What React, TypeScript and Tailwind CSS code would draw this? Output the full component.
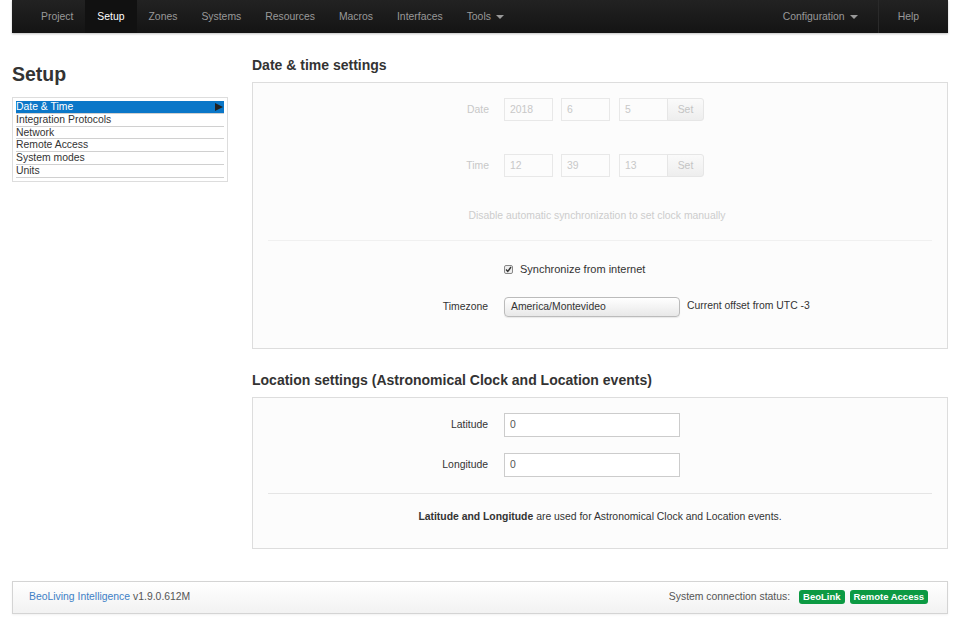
import React from "react";

const font = { fontFamily: '"Liberation Sans", Arial, sans-serif' };

function Caret() {
  return <span className="inline-block ml-[5px] align-middle border-t-[4px] border-t-current border-x-[4px] border-x-transparent w-0 h-0" />;
}

function NavItem({ label, active, caret }: { label: string; active?: boolean; caret?: boolean }) {
  return (
    <div
      className={
        "h-full flex items-center px-[12px] " +
        (active ? "bg-[#111111] text-white" : "text-[#999999]")
      }
    >
      {label}
      {caret && <Caret />}
    </div>
  );
}

function DisabledInput({ v }: { v: string }) {
  return (
    <div className="w-[49px] h-[23px] border border-[#e8e8e8] bg-[#fcfcfc] text-[#c8c8c8] pl-[5px] flex items-center text-[10.4px]">
      {v}
    </div>
  );
}

function DateRow({ label, vals }: { label: string; vals: string[] }) {
  return (
    <div className="flex items-center">
      <div className="w-[236px] text-right text-[#c8c8c8] text-[10.4px]">{label}</div>
      <div className="ml-[15px] flex items-center">
        <DisabledInput v={vals[0]} />
        <div className="w-[8px]" />
        <DisabledInput v={vals[1]} />
        <div className="w-[9px]" />
        <DisabledInput v={vals[2]} />
        <div className="w-[37px] h-[23px] border border-[#e6e6e6] rounded-r-[3px] bg-gradient-to-b from-[#fafafa] to-[#eeeeee] text-[#c4c4c4] flex items-center justify-center text-[10.4px] -ml-px">
          Set
        </div>
      </div>
    </div>
  );
}

export default function App() {
  const items = ["Date & Time", "Integration Protocols", "Network", "Remote Access", "System modes", "Units"];
  return (
    <div style={font} className="w-[958px] h-[626px] bg-white text-[#333333] overflow-hidden">
      {/* Navbar */}
      <div className="ml-[12px] w-[936px] h-[33px] bg-gradient-to-b from-[#222222] to-[#141414] flex items-stretch text-[10.4px] shadow-[0_1px_2px_rgba(0,0,0,0.25)]">
        <div className="flex items-stretch pl-[17px]">
          <NavItem label="Project" />
          <NavItem label="Setup" active />
          <NavItem label="Zones" />
          <NavItem label="Systems" />
          <NavItem label="Resources" />
          <NavItem label="Macros" />
          <NavItem label="Interfaces" />
          <NavItem label="Tools" caret />
        </div>
        <div className="flex-1" />
        <div className="flex items-stretch">
          <div className="h-full flex items-center px-[12px] text-[#999999] mr-[8px]">
            Configuration
            <Caret />
          </div>
          <div className="w-px bg-[#0c0c0c] border-r border-r-[#2a2a2a]" />
          <div className="h-full flex items-center pl-[19px] pr-[29px] text-[#999999]">Help</div>
        </div>
      </div>

      {/* Main */}
      <div className="ml-[12px] w-[936px] flex">
        {/* Sidebar */}
        <div className="w-[216px] shrink-0">
          <div className="text-[19.5px] font-bold text-[#333333] mt-[29px] leading-[24px]">Setup</div>
          <div className="mt-[11px] border border-[#dddddd] px-[3px] pt-[3px] pb-[3px]">
            {items.map((it, i) => (
              <div
                key={it}
                className={
                  "h-[12.8px] leading-[12px] text-[10.4px] flex items-center justify-between border-b border-b-[#d0d0d0] " +
                  (i === 0 ? "bg-[#0b77c8] text-white" : "text-[#333333]")
                }
              >
                <span>{it}</span>
                {i === 0 && (
                  <span className="w-0 h-0 border-y-[4.5px] border-y-transparent border-l-[8px] border-l-[#222222] mr-[1px]" />
                )}
              </div>
            ))}
          </div>
        </div>

        {/* Content */}
        <div className="ml-[24px] flex-1">
          <div className="mt-[24px] text-[14px] font-bold leading-[17px] text-[#333333]">Date &amp; time settings</div>
          <div className="mt-[8px] border border-[#dddddd] bg-[#fcfcfc] pt-[15px] pb-[31px]">
            <DateRow label="Date" vals={["2018", "6", "5"]} />
            <div className="h-[33px]" />
            <DateRow label="Time" vals={["12", "39", "13"]} />
            <div className="mt-[32px] text-center text-[10.4px] text-[#cccccc] leading-[14px] pr-[6px]">
              Disable automatic synchronization to set clock manually
            </div>
            <div className="mx-[15px] mt-[17px] border-t border-t-[#f0f0f0]" />
            <div className="mt-[20px] flex items-center">
              <div className="w-[251px]" />
              <div className="w-[9px] h-[9px] border border-[#888888] rounded-[2px] bg-[#eeeeee] flex items-center justify-center">
                <svg width="7" height="7" viewBox="0 0 7 7">
                  <path d="M1 3.5 L2.8 5.5 L6 1" stroke="#333" strokeWidth="1.4" fill="none" />
                </svg>
              </div>
              <span className="ml-[7px] text-[11px] text-[#333333]">Synchronize from internet</span>
            </div>
            <div className="mt-[19px] flex items-center">
              <div className="w-[235px] text-right text-[10.4px] text-[#333333]">Timezone</div>
              <div className="ml-[16px] w-[176px] h-[20px] rounded-[4px] border border-[#bbbbbb] bg-gradient-to-b from-[#ffffff] to-[#e8e8e8] flex items-center pl-[6px] text-[10.4px] text-[#333333] shadow-[0_1px_1px_rgba(0,0,0,0.08)]">
                America/Montevideo
              </div>
              <div className="ml-[7px] text-[10.4px] text-[#333333] -mt-[2px]">Current offset from UTC -3</div>
            </div>
          </div>

          <div className="mt-[23px] text-[14px] font-bold leading-[17px] text-[#333333]">
            Location settings (Astronomical Clock and Location events)
          </div>
          <div className="mt-[8px] border border-[#dddddd] bg-[#fcfcfc] pt-[15px] pb-[24px]">
            <div className="flex items-center">
              <div className="w-[235px] text-right text-[10.4px] text-[#333333]">Latitude</div>
              <div className="ml-[16px] w-[176px] h-[24px] border border-[#cccccc] bg-white flex items-center pl-[5px] text-[10.4px] text-[#555555]">0</div>
            </div>
            <div className="mt-[16px] flex items-center">
              <div className="w-[235px] text-right text-[10.4px] text-[#333333]">Longitude</div>
              <div className="ml-[16px] w-[176px] h-[24px] border border-[#cccccc] bg-white flex items-center pl-[5px] text-[10.4px] text-[#555555]">0</div>
            </div>
            <div className="mx-[15px] mt-[16px] border-t border-t-[#e5e5e5]" />
            <div className="mt-[16px] text-center text-[10.4px] text-[#333333] leading-[14px]">
              <b>Latitude and Longitude</b> are used for Astronomical Clock and Location events.
            </div>
          </div>
        </div>
      </div>

      {/* Footer */}
      <div className="ml-[12px] w-[936px] mt-[32px] h-[33px] border border-[#d4d4d4] bg-gradient-to-b from-[#ffffff] to-[#f2f2f2] flex items-center px-[16px] text-[10.4px] shadow-[0_1px_2px_rgba(0,0,0,0.06)]">
        <span className="text-[#3d80c6]">BeoLiving Intelligence</span>
        <span className="ml-[3px] text-[#555555]">v1.9.0.612M</span>
        <div className="flex-1" />
        <span className="text-[#555555]">System connection status:</span>
        <span className="ml-[9px] px-[4px] h-[14px] flex items-center rounded-[3px] bg-[#0c9a43] text-white font-bold text-[9.5px]">BeoLink</span>
        <span className="ml-[5px] px-[4px] h-[14px] flex items-center rounded-[3px] bg-[#0c9a43] text-white font-bold text-[9.5px] mr-[3px]">Remote Access</span>
      </div>
    </div>
  );
}
